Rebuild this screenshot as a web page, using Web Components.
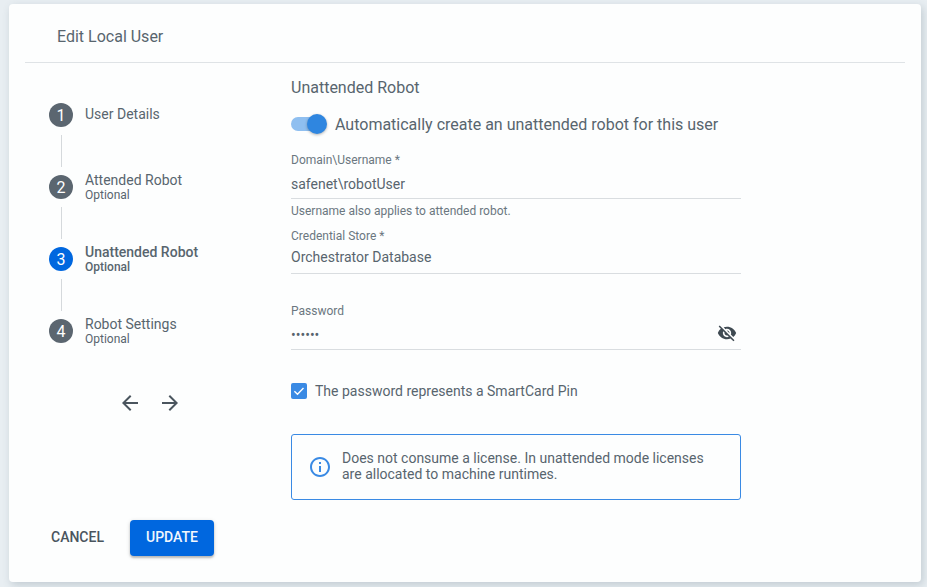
<!DOCTYPE html>
<html>
<head>
<meta charset="utf-8">
<title>Edit Local User</title>
<style>
  html, body { margin: 0; height: 100%; }
  body {
    background: #e8eef2;
    font-family: Roboto, "Liberation Sans", sans-serif;
    color: #58656e;
    overflow: hidden;
  }
</style>
</head>
<body>
<edit-dialog heading="Edit Local User">
  <step-list slot="steps">
    <step-item num="1" label="User Details"></step-item>
    <step-item num="2" label="Attended Robot" sub="Optional"></step-item>
    <step-item num="3" label="Unattended Robot" sub="Optional" active></step-item>
    <step-item num="4" label="Robot Settings" sub="Optional" last></step-item>
  </step-list>

  <form-heading>Unattended Robot</form-heading>
  <toggle-row>Automatically create an unattended robot for this user</toggle-row>
  <text-field label="Domain\Username *" value="safenet\robotUser" help="Username also applies to attended robot." style="--top:17px;--gap:7px;--under:4px"></text-field>
  <text-field label="Credential Store *" value="Orchestrator Database" style="--top:11px;--gap:4px;--under:6px"></text-field>
  <text-field label="Password" value="••••••" eye style="--top:30px;--gap:7px;--under:4px"></text-field>
  <check-row>The password represents a SmartCard Pin</check-row>
  <info-box>Does not consume a license. In unattended mode licenses are allocated to machine runtimes.</info-box>

  <dialog-button slot="footer">CANCEL</dialog-button>
  <dialog-button slot="footer" primary>UPDATE</dialog-button>
</edit-dialog>

<script>
class EditDialog extends HTMLElement {
  constructor() {
    super();
    let shadowDom = this.attachShadow({ mode: "open" });
    shadowDom.innerHTML = `
      <style>
      :host {
        display: block;
        box-sizing: border-box;
        height: 578px;
        width: 912px;
        margin: 4px 0 0 9px;
        background: #fdfefe;
        border-radius: 4px;
        box-shadow: 2px 3px 8px rgba(60, 80, 95, .22);
      }
      .header {
        height: 59px;
        margin: 0 16px;
        padding: 6px 0 0 32px;
        display: flex;
        align-items: center;
        box-sizing: border-box;
        border-bottom: 1px solid #dfe3e6;
        font-size: 16px;
      }
      .body { display: flex; height: 457px; }
      .side { width: 282px; flex: none; padding: 40px 0 0 40px; box-sizing: border-box; }
      .main { width: 450px; }
      .footer { display: flex; gap: 10px; padding: 0 0 0 26px; }
      </style>
      <div class="header"></div>
      <div class="body">
        <div class="side"><slot name="steps"></slot></div>
        <div class="main"><slot></slot></div>
      </div>
      <div class="footer"><slot name="footer"></slot></div>
    `;
    shadowDom.querySelector(".header").textContent = this.getAttribute("heading");
  }
}

class StepList extends HTMLElement {
  constructor() {
    super();
    let shadowDom = this.attachShadow({ mode: "open" });
    shadowDom.innerHTML = `
      <style>
      :host { display: block; }
      .nav { display: flex; gap: 16px; margin: 48px 0 0 69px; color: #4a555e; }
      svg { width: 24px; height: 24px; display: block; fill: currentColor; }
      </style>
      <slot></slot>
      <div class="nav">
        <svg viewBox="0 0 24 24"><path d="M20 11H7.83l5.59-5.59L12 4l-8 8 8 8 1.41-1.41L7.83 13H20z"/></svg>
        <svg viewBox="0 0 24 24"><path d="M12 4l-1.41 1.41L16.17 11H4v2h12.17l-5.58 5.59L12 20l8-8z"/></svg>
      </div>
    `;
  }
}

class StepItem extends HTMLElement {
  constructor() {
    super();
    let shadowDom = this.attachShadow({ mode: "open" });
    let active = this.hasAttribute("active");
    let sub = this.getAttribute("sub");
    shadowDom.innerHTML = `
      <style>
      :host { display: block; }
      .row { display: flex; gap: 12px; height: 24px; align-items: center; }
      .num {
        width: 24px; height: 24px; border-radius: 50%; flex: none;
        background: ${active ? "#0067df" : "#5b6670"};
        color: #fff; font-size: 16px;
        display: flex; align-items: center; justify-content: center;
      }
      .text { display: flex; flex-direction: column; ${sub ? "" : "margin-top: -2px;"} }
      .label { font-size: 14px; line-height: 16px; ${active ? "font-weight: 500;" : ""} }
      .sub { font-size: 12px; line-height: 14px; ${active ? "font-weight: 500;" : ""} }
      .line { width: 1px; height: 32px; margin: 8px 0 8px 12px; background: #d5d9dc; }
      </style>
      <div class="row">
        <div class="num"></div>
        <div class="text"><div class="label"></div>${sub ? '<div class="sub"></div>' : ""}</div>
      </div>
      ${this.hasAttribute("last") ? "" : '<div class="line"></div>'}
    `;
    shadowDom.querySelector(".num").textContent = this.getAttribute("num");
    shadowDom.querySelector(".label").textContent = this.getAttribute("label");
    if (sub) shadowDom.querySelector(".sub").textContent = sub;
  }
}

class FormHeading extends HTMLElement {
  constructor() {
    super();
    let shadowDom = this.attachShadow({ mode: "open" });
    shadowDom.innerHTML = `
      <style>
      :host { display: block; margin-top: 15px; font-size: 16px; line-height: 20px; }
      </style>
      <slot></slot>
    `;
  }
}

class ToggleRow extends HTMLElement {
  constructor() {
    super();
    let shadowDom = this.attachShadow({ mode: "open" });
    shadowDom.innerHTML = `
      <style>
      :host { display: flex; align-items: center; gap: 8px; height: 24px; margin-top: 14px; font-size: 16px; }
      .switch { width: 36px; height: 20px; flex: none; display: flex; align-items: center; position: relative; }
      .track { width: 32px; height: 14px; border-radius: 7px; background: #8fbff0; }
      .thumb {
        position: absolute; right: 0; top: 0;
        width: 20px; height: 20px; border-radius: 50%;
        background: #2f86e0;
        box-shadow: 0 1px 3px rgba(0, 0, 0, .3);
      }
      </style>
      <div class="switch"><div class="track"></div><div class="thumb"></div></div>
      <slot></slot>
    `;
  }
}

class TextField extends HTMLElement {
  constructor() {
    super();
    let shadowDom = this.attachShadow({ mode: "open" });
    let help = this.getAttribute("help");
    shadowDom.innerHTML = `
      <style>
      :host { display: block; margin-top: var(--top); }
      .label { font-size: 12px; line-height: 14px; color: #6b7780; }
      .value {
        font-size: 14px; line-height: 20px;
        margin-top: var(--gap);
        padding-bottom: var(--under);
        border-bottom: 1px solid #d9dde0;
        position: relative;
      }
      .eye { position: absolute; right: 4px; top: -2px; width: 20px; height: 20px; fill: #3f4a52; }
      .help { font-size: 12px; line-height: 14px; margin-top: 5px; color: #6b7780; }
      </style>
      <div class="label"></div>
      <div class="value"><span class="text"></span>${this.hasAttribute("eye") ? `
        <svg class="eye" viewBox="0 0 24 24"><path d="M12 7c2.76 0 5 2.24 5 5 0 .65-.13 1.26-.36 1.83l2.92 2.92c1.51-1.26 2.7-2.89 3.43-4.75-1.73-4.39-6-7.5-11-7.5-1.4 0-2.74.25-3.98.7l2.16 2.16C10.74 7.13 11.35 7 12 7zM2 4.27l2.28 2.28.46.46C3.08 8.3 1.78 10.02 1 12c1.73 4.39 6 7.5 11 7.5 1.55 0 3.03-.3 4.38-.84l.42.42L19.73 22 21 20.73 3.27 3 2 4.27zM7.53 9.8l1.55 1.55c-.05.21-.08.43-.08.65 0 1.66 1.34 3 3 3 .22 0 .44-.03.65-.08l1.55 1.55c-.67.33-1.41.53-2.2.53-2.76 0-5-2.24-5-5 0-.79.2-1.53.53-2.2zm4.31-.78l3.15 3.15.02-.16c0-1.66-1.34-3-3-3l-.17.01z"/></svg>` : ""}</div>
      ${help ? '<div class="help"></div>' : ""}
    `;
    shadowDom.querySelector(".label").textContent = this.getAttribute("label");
    shadowDom.querySelector(".text").textContent = this.getAttribute("value");
    if (help) shadowDom.querySelector(".help").textContent = help;
  }
}

class CheckRow extends HTMLElement {
  constructor() {
    super();
    let shadowDom = this.attachShadow({ mode: "open" });
    shadowDom.innerHTML = `
      <style>
      :host { display: flex; align-items: center; gap: 8px; height: 20px; margin-top: 31px; font-size: 14px; }
      .box { width: 16px; height: 16px; border-radius: 2px; background: #3a8ae4; flex: none; }
      svg { width: 16px; height: 16px; display: block; fill: none; stroke: #fff; stroke-width: 1.4; }
      </style>
      <div class="box"><svg viewBox="0 0 16 16"><path d="M3.4 8.2l3.1 3 6-6.2"/></svg></div>
      <slot></slot>
    `;
  }
}

class InfoBox extends HTMLElement {
  constructor() {
    super();
    let shadowDom = this.attachShadow({ mode: "open" });
    shadowDom.innerHTML = `
      <style>
      :host {
        display: flex; align-items: center; gap: 10px;
        box-sizing: border-box; height: 66px; margin-top: 33px;
        padding: 0 16px; border: 1px solid #3a8ae4; border-radius: 3px;
        font-size: 14px; line-height: 16px;
      }
      svg { width: 24px; height: 24px; flex: none; fill: #3a8ae4; }
      .text { width: 385px; margin-top: -2px; }
      </style>
      <svg viewBox="0 0 24 24"><path d="M11 7h2v2h-2zm0 4h2v6h-2zm1-9C6.48 2 2 6.48 2 12s4.48 10 10 10 10-4.48 10-10S17.52 2 12 2zm0 18c-4.41 0-8-3.59-8-8s3.59-8 8-8 8 3.59 8 8-3.59 8-8 8z"/></svg>
      <div class="text"><slot></slot></div>
    `;
  }
}

class DialogButton extends HTMLElement {
  constructor() {
    super();
    let shadowDom = this.attachShadow({ mode: "open" });
    let primary = this.hasAttribute("primary");
    shadowDom.innerHTML = `
      <style>
      :host {
        display: flex; align-items: center; justify-content: center;
        box-sizing: border-box;
        height: 36px; padding: 0 16px 2px; border-radius: 4px;
        font-size: 14px; font-weight: 500;
        ${primary
          ? "background: #0067df; color: #f2f7fd; box-shadow: 0 2px 2px rgba(0,0,0,.2), 0 1px 4px rgba(0,0,0,.15);"
          : "color: #4a555e;"}
      }
      </style>
      <slot></slot>
    `;
  }
}

customElements.define("edit-dialog", EditDialog);
customElements.define("step-list", StepList);
customElements.define("step-item", StepItem);
customElements.define("form-heading", FormHeading);
customElements.define("toggle-row", ToggleRow);
customElements.define("text-field", TextField);
customElements.define("check-row", CheckRow);
customElements.define("info-box", InfoBox);
customElements.define("dialog-button", DialogButton);
</script>
</body>
</html>
